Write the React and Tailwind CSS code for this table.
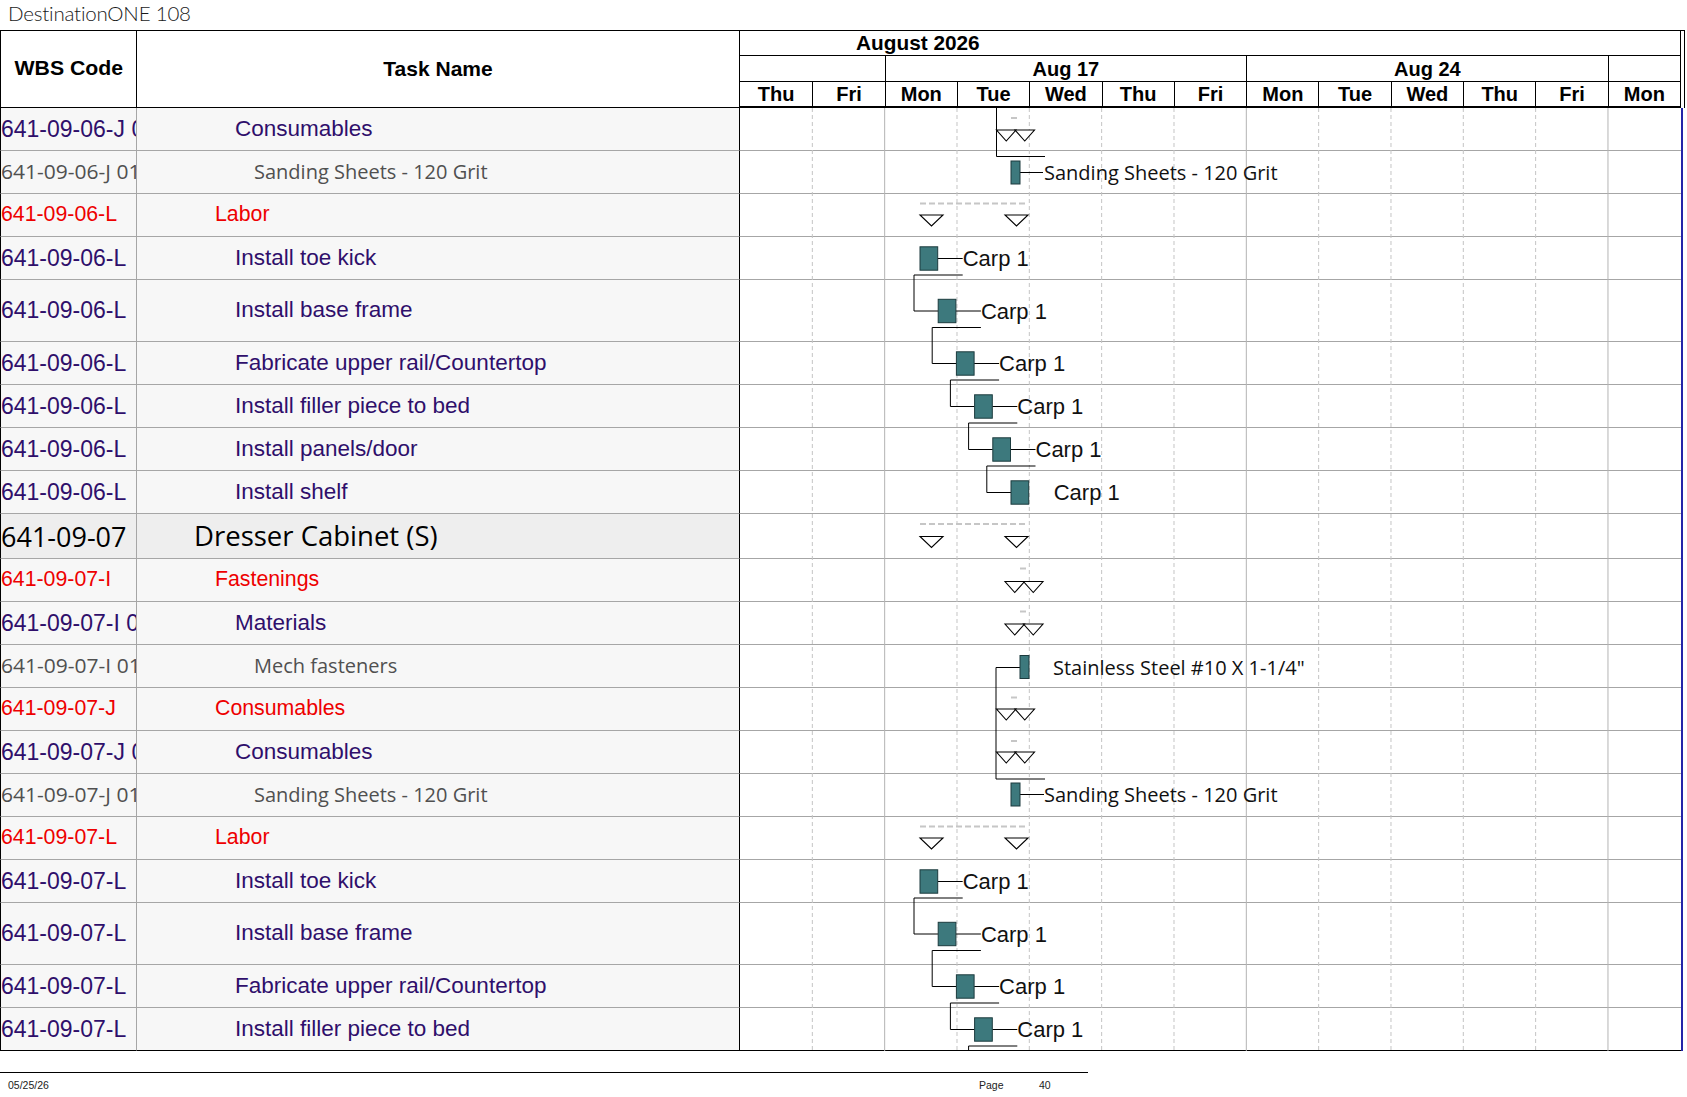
import React from 'react';

const rows = [
  { wbs: '641-09-06-J 01', name: 'Consumables', kind: 'purple', h: 43 },
  { wbs: '641-09-06-J 01.01', name: 'Sanding Sheets - 120 Grit', kind: 'gray', h: 43 },
  { wbs: '641-09-06-L', name: 'Labor', kind: 'red', h: 43 },
  { wbs: '641-09-06-L', name: 'Install toe kick', kind: 'purple', h: 43 },
  { wbs: '641-09-06-L', name: 'Install base frame', kind: 'purple', h: 62 },
  { wbs: '641-09-06-L', name: 'Fabricate upper rail/Countertop', kind: 'purple', h: 43 },
  { wbs: '641-09-06-L', name: 'Install filler piece to bed', kind: 'purple', h: 43 },
  { wbs: '641-09-06-L', name: 'Install panels/door', kind: 'purple', h: 43 },
  { wbs: '641-09-06-L', name: 'Install shelf', kind: 'purple', h: 43 },
  { wbs: '641-09-07', name: 'Dresser Cabinet (S)', kind: 'top', h: 45 },
  { wbs: '641-09-07-I', name: 'Fastenings', kind: 'red', h: 43 },
  { wbs: '641-09-07-I 01', name: 'Materials', kind: 'purple', h: 43 },
  { wbs: '641-09-07-I 01.01', name: 'Mech fasteners', kind: 'gray', h: 43 },
  { wbs: '641-09-07-J', name: 'Consumables', kind: 'red', h: 43 },
  { wbs: '641-09-07-J 01', name: 'Consumables', kind: 'purple', h: 43 },
  { wbs: '641-09-07-J 01.01', name: 'Sanding Sheets - 120 Grit', kind: 'gray', h: 43 },
  { wbs: '641-09-07-L', name: 'Labor', kind: 'red', h: 43 },
  { wbs: '641-09-07-L', name: 'Install toe kick', kind: 'purple', h: 43 },
  { wbs: '641-09-07-L', name: 'Install base frame', kind: 'purple', h: 62 },
  { wbs: '641-09-07-L', name: 'Fabricate upper rail/Countertop', kind: 'purple', h: 43 },
  { wbs: '641-09-07-L', name: 'Install filler piece to bed', kind: 'purple', h: 43 },
];

const H_CLASS = { 43: 'h-[43px]', 62: 'h-[62px]', 45: 'h-[45px]' };

const ARIAL = "font-['Liberation_Sans',Arial,sans-serif]";
const OPEN = "font-['Open_Sans',sans-serif]";

const STYLE = {
  purple: {
    wbs: `${ARIAL} text-[23px] text-[#2f0f6b]`,
    name: `${ARIAL} text-[22.5px] text-[#2f0f6b] pl-[98px]`,
    bg: 'bg-[#f7f7f7]',
  },
  red: {
    wbs: `${ARIAL} text-[21.3px] text-[#ee0000]`,
    name: `${ARIAL} text-[21.3px] text-[#ee0000] pl-[78px]`,
    bg: 'bg-[#f7f7f7]',
  },
  gray: {
    wbs: `${OPEN} text-[20px] text-[#505050] origin-left scale-x-[1.05]`,
    name: `${OPEN} text-[20px] text-[#505050] pl-[117px]`,
    bg: 'bg-[#f7f7f7]',
  },
  top: {
    wbs: `${OPEN} text-[27px] text-black`,
    name: `${OPEN} text-[27.5px] text-black pl-[57px]`,
    bg: 'bg-[#eeeeee]',
  },
};

const DAYS = ['Thu', 'Fri', 'Mon', 'Tue', 'Wed', 'Thu', 'Fri', 'Mon', 'Tue', 'Wed', 'Thu', 'Fri', 'Mon'];
const DAY = 940.3 / 13;
const TOP = 108;

function Tri({ x, y, w = 23, h = 11 }) {
  return (
    <polygon
      points={`${x},${y} ${x + w},${y} ${x + w / 2},${y + h}`}
      fill="white"
      stroke="black"
      strokeWidth="1.1"
    />
  );
}

function Dash({ x1, x2, y }) {
  return <line x1={x1} x2={x2} y1={y} y2={y} stroke="#c6c6c6" strokeWidth="2" strokeDasharray="6 3" />;
}

function Bar({ x, y, w, h }) {
  return <rect x={x} y={y} width={w} height={h} fill="#3d797d" stroke="#1c3b3e" strokeWidth="1" />;
}

function Ln({ pts }) {
  return <polyline points={pts.map((p) => p.join(',')).join(' ')} fill="none" stroke="black" strokeWidth="1" />;
}

function Label({ x, y, children, calibri }) {
  return (
    <text
      x={x}
      y={y}
      dominantBaseline="central"
      fontFamily={calibri ? 'Open Sans, sans-serif' : 'Liberation Sans, Arial, sans-serif'}
      fontSize={calibri ? 20 : 22}
      fill="#111"
    >
      {children}
    </text>
  );
}

function Gantt() {
  const H = rows.map((r) => r.h);
  const T = [];
  let acc = TOP;
  H.forEach((h) => {
    T.push(acc);
    acc += h;
  });
  const mid = (i) => T[i] + H[i] / 2;

  const els = [];

  for (let k = 1; k <= 12; k++) {
    const x = 740 + DAY * k;
    const solid = k === 2 || k === 7 || k === 12;
    els.push(
      <line
        key={`d${k}`}
        x1={x}
        x2={x}
        y1={TOP}
        y2={TOP + 943}
        stroke={solid ? '#b4b4b4' : '#c4c4c4'}
        strokeWidth="1"
        strokeDasharray={solid ? undefined : '4 3'}
      />
    );
  }

  const carp = (idxs, linkLast, key) =>
    idxs.map((r, i) => {
      const x = 920 + 18.2 * i;
      const m = mid(r);
      const isLast = i === idxs.length - 1;
      const hasLine = !isLast || linkLast;
      const lx = x + 17.7 + 25;
      const nextM = isLast ? m + 80 : mid(idxs[i + 1]);
      return (
        <g key={`${key}${i}`}>
          {hasLine && (
            <Ln
              pts={[
                [lx, m + 16.5],
                [x - 6, m + 16.5],
                [x - 6, nextM],
                [x + 18.2, nextM],
              ]}
            />
          )}
          {hasLine && <Ln pts={[[x + 17.7, m], [lx, m]]} />}
          <Bar x={x} y={m - 11.7} w={17.7} h={23.4} />
          <Label x={lx} y={m}>Carp 1</Label>
        </g>
      );
    });

  // Upper block
  els.push(
    <g key="up">
      <Ln pts={[[996.5, TOP], [996.5, T[1] + 5.5], [1045, T[1] + 5.5]]} />
      <Dash x1={1011} x2={1020} y={T[0] + 10} />
      <Tri x={996.5} y={T[0] + 22} w={19.5} />
      <Tri x={1015} y={T[0] + 22} w={19.5} />
      <Ln pts={[[1020, T[1] + 21.5], [1043, T[1] + 21.5]]} />
      <Bar x={1011} y={T[1] + 10} w={9} h={23} />
      <Label x={1044} y={T[1] + 21.5} calibri>Sanding Sheets - 120 Grit</Label>
      <Dash x1={920} x2={1028} y={T[2] + 9.5} />
      <Tri x={920} y={T[2] + 21} />
      <Tri x={1005} y={T[2] + 21} />
    </g>
  );
  els.push(<g key="c1">{carp([3, 4, 5, 6, 7, 8], false, 'a')}</g>);

  // Lower block
  els.push(
    <g key="low">
      <Dash x1={920} x2={1028} y={T[9] + 10} />
      <Tri x={920} y={T[9] + 22.5} />
      <Tri x={1005} y={T[9] + 22.5} />

      <Dash x1={1020} x2={1029} y={T[10] + 9.5} />
      <Tri x={1005} y={T[10] + 22.5} w={19.5} />
      <Tri x={1023.5} y={T[10] + 22.5} w={19.5} />

      <Dash x1={1020} x2={1029} y={T[11] + 9.5} />
      <Tri x={1005} y={T[11] + 22} w={19.5} />
      <Tri x={1023.5} y={T[11] + 22} w={19.5} />

      <Ln pts={[[1020, T[12] + 22.5], [996, T[12] + 22.5], [996, T[15] + 5], [1045, T[15] + 5]]} />
      <Bar x={1020} y={T[12] + 10.5} w={9} h={23} />
      <Label x={1053} y={T[12] + 22.5} calibri>Stainless Steel #10 X 1-1/4"</Label>

      <Dash x1={1011} x2={1020} y={T[13] + 9.5} />
      <Tri x={996.5} y={T[13] + 21} w={19.5} />
      <Tri x={1015} y={T[13] + 21} w={19.5} />

      <Dash x1={1011} x2={1020} y={T[14] + 10} />
      <Tri x={996.5} y={T[14] + 21} w={19.5} />
      <Tri x={1015} y={T[14] + 21} w={19.5} />

      <Ln pts={[[1020, T[15] + 20.5], [1044, T[15] + 20.5]]} />
      <Bar x={1011} y={T[15] + 9} w={9} h={23} />
      <Label x={1044} y={T[15] + 20.5} calibri>Sanding Sheets - 120 Grit</Label>

      <Dash x1={920} x2={1028} y={T[16] + 9.5} />
      <Tri x={920} y={T[16] + 21} />
      <Tri x={1005} y={T[16] + 21} />
    </g>
  );
  els.push(<g key="c2">{carp([17, 18, 19, 20], true, 'b')}</g>);

  return (
    <svg
      className="absolute left-[740px] top-0 pointer-events-none"
      width="941"
      height="943"
      viewBox={`740 ${TOP} 941 943`}
    >
      {els}
    </svg>
  );
}

function Header() {
  return (
    <div className={`flex h-[78px] w-[1685px] border-t border-black ${ARIAL} font-bold text-black`}>
      <div className="w-[137px] shrink-0 border-l border-r border-b border-black flex items-center justify-center">
        <span className="inline-block text-[19.5px] scale-x-[1.09] origin-center">WBS Code</span>
      </div>
      <div className="w-[603px] shrink-0 border-r border-b border-black flex items-center justify-center text-[21px]">
        Task Name
      </div>
      <div className="w-[941px] shrink-0 border-r border-b-2 border-black flex flex-col">
        <div className="h-[25px] border-b border-black flex items-center pl-[116px] text-[20.8px] leading-none">
          August 2026
        </div>
        <div className="h-[26px] border-b border-black grid grid-cols-[repeat(13,minmax(0,1fr))] text-[20px] leading-none">
          <div className="col-span-2" />
          <div className="col-span-5 border-l border-black flex items-center justify-center">Aug 17</div>
          <div className="col-span-5 border-l border-black flex items-center justify-center">Aug 24</div>
          <div className="col-span-1 border-l border-black" />
        </div>
        <div className="flex-1 grid grid-cols-[repeat(13,minmax(0,1fr))] text-[20px] leading-none">
          {DAYS.map((d, i) => (
            <div
              key={i}
              className={`flex items-center justify-center ${i > 0 ? 'border-l border-black' : ''}`}
            >
              {d}
            </div>
          ))}
        </div>
      </div>
      <div className="w-[4px] shrink-0 border-r border-black" />
    </div>
  );
}

function Body() {
  return (
    <div className="relative w-[1685px]">
      {rows.map((r, i) => {
        const s = STYLE[r.kind];
        const last = i === rows.length - 1;
        const bb = last ? 'border-b border-b-black' : 'border-b border-b-[#a6a6a6]';
        return (
          <div key={i} className={`flex ${H_CLASS[r.h]}`}>
            <div
              className={`w-[137px] shrink-0 overflow-hidden whitespace-nowrap flex items-center border-l border-l-black border-r border-r-[#a6a6a6] ${bb} ${s.bg}`}
            >
              <span className={`inline-block leading-none ${s.wbs}`}>{r.wbs}</span>
            </div>
            <div
              className={`w-[603px] shrink-0 overflow-hidden whitespace-nowrap flex items-center border-r border-r-black ${bb} ${s.bg}`}
            >
              <span className={`leading-none ${s.name}`}>{r.name}</span>
            </div>
            <div className={`w-[941px] shrink-0 bg-white ${bb}`} />
            <div className="w-[4px] shrink-0 border-l-2 border-l-[#2424a8]" />
          </div>
        );
      })}
      <Gantt />
    </div>
  );
}

export default function App() {
  return (
    <div className="w-[1687px] h-[1097px] bg-white overflow-hidden">
      <div className="h-[30px] pl-[8px] font-['Lato',sans-serif] font-light text-[20.5px] tracking-[-0.2px] leading-[27px] text-[#1a1a1a]">
        DestinationONE 108
      </div>
      <Header />
      <Body />
      <div
        className={`mt-[21px] w-[1088px] h-[26px] border-t border-black flex items-center text-[10.5px] text-[#222] ${ARIAL}`}
      >
        <span className="pl-[8px] w-[979px] shrink-0">05/25/26</span>
        <span className="w-[60px] shrink-0">Page</span>
        <span>40</span>
      </div>
    </div>
  );
}
